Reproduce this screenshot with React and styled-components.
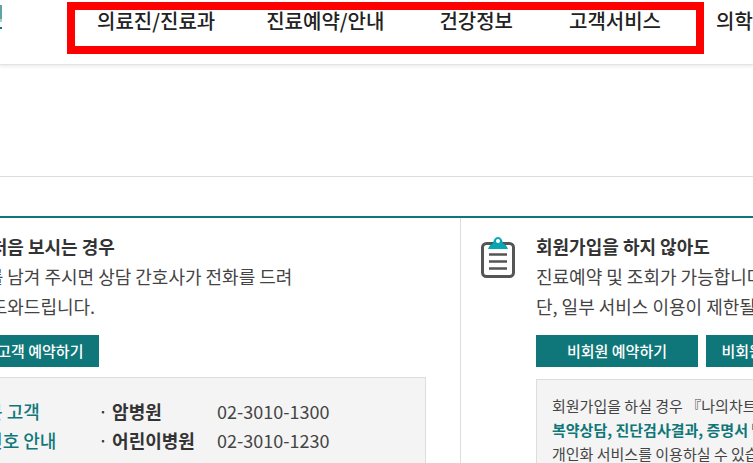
import React from 'react';
import styled, { createGlobalStyle } from 'styled-components';

const GlobalStyle = createGlobalStyle`
  html, body {
    margin: 0;
    padding: 0;
    background: #fff;
  }
  body {
    font-family: "Noto Sans CJK KR", "Noto Sans", sans-serif;
    color: #333;
  }
`;

const Viewport = styled.div`
  position: relative;
  width: 753px;
  height: 463px;
  overflow: hidden;
`;

const Header = styled.header`
  display: flex;
  align-items: flex-start;
  height: 64px;
  border-bottom: 1px solid #e4e4e4;
  box-shadow: 0 2px 3px rgba(0, 0, 0, 0.07);
`;

const LogoEdge = styled.svg`
  flex: none;
  display: block;
`;

const Nav = styled.nav`
  display: flex;
  padding: 6px 0 0 95px;
  white-space: nowrap;
`;

const NavItem = styled.a`
  margin-left: ${(props) => props.space || 0}px;
  font-size: 20px;
  font-weight: 500;
  line-height: 30px;
  color: #222;
`;

const Highlight = styled.div`
  position: absolute;
  left: 67px;
  top: 2px;
  width: 637px;
  height: 52px;
  box-sizing: border-box;
  border: 8px solid #f00;
`;

const Band = styled.div`
  height: 111px;
  border-bottom: 1px solid #ddd;
`;

const Columns = styled.div`
  display: flex;
  width: 1300px;
  margin: 39px 0 0 -138px;
  border-top: 2px solid #0f7779;
`;

const Panel = styled.section`
  flex: none;
  display: grid;
  grid-template-columns: 34px 1fr;
  column-gap: 21px;
  box-sizing: border-box;
  width: ${(props) => props.width}px;
  height: 260px;
  padding: 13px 0 0 20px;
  border-right: ${(props) => (props.divided ? '1px solid #ddd' : '0')};
`;

const Icon = styled.svg`
  display: block;
  margin-top: 6px;
`;

const Title = styled.h3`
  margin: 0;
  font-size: 18px;
  font-weight: 700;
  line-height: 30px;
  color: #333;
  white-space: nowrap;
`;

const Text = styled.p`
  margin: 0;
  font-size: 18px;
  line-height: 30px;
  color: #444;
  white-space: nowrap;
`;

const Buttons = styled.div`
  display: flex;
  gap: 8px;
  margin-top: 14px;
`;

const Button = styled.a`
  display: block;
  width: 162px;
  font-size: 15px;
  font-weight: 500;
  line-height: 32px;
  text-align: center;
  color: #fff;
  background: #0f7779;
  white-space: nowrap;
`;

const InfoBox = styled.div`
  box-sizing: border-box;
  width: 489px;
  height: 160px;
  margin-top: ${(props) => props.gap}px;
  padding: ${(props) => props.pad}px 15px 0;
  background: #f4f4f4;
  border: 1px solid #ddd;
`;

const ContactRow = styled.div`
  display: grid;
  grid-template-columns: 147px 117px 1fr;
  font-size: 18px;
  line-height: 29px;
`;

const ContactLink = styled.a`
  font-weight: 500;
  color: #0f7779;
  white-space: nowrap;
`;

const ContactName = styled.span`
  font-weight: 700;
  color: #333;
  white-space: nowrap;

  &:before {
    content: "·";
    margin: 0 4px 0 -2px;
    font-weight: 400;
  }
`;

const Phone = styled.span`
  color: #444;
`;

const NoteLine = styled.p`
  margin: 0;
  font-size: 15px;
  font-weight: ${(props) => (props.strong ? 700 : 400)};
  line-height: 24px;
  color: ${(props) => (props.strong ? '#0f7779' : '#444')};
  white-space: nowrap;
`;

function ClipboardIcon() {
  return (
    <Icon width="34" height="41" viewBox="0 0 34 41">
      <rect x="1.5" y="6.5" width="31" height="33" rx="4" fill="#fff" stroke="#555" strokeWidth="3" />
      <path d="M7 12 C8 9 10 7 12 6.5 C12.5 3 14 0 17 0 C20 0 21.5 3 22 6.5 C24 7 26 9 27 12 Z" fill="#0aa5b2" />
      <circle cx="17" cy="4" r="2" fill="#fff" />
      <path d="M8 17.5 H26 M8 24.5 H26 M8 31.5 H26" stroke="#555" strokeWidth="2.6" />
    </Icon>
  );
}

export default function App() {
  return (
    <Viewport>
      <GlobalStyle />
      <Header>
        <LogoEdge width="2" height="30" viewBox="0 0 2 30">
          <rect y="5" width="2" height="14" fill="#5fa3a5" />
          <rect y="19" width="2" height="3" fill="#a9cfd0" />
          <rect y="27" width="2" height="2" fill="#0f7779" />
        </LogoEdge>
        <Nav>
          <NavItem>의료진/진료과</NavItem>
          <NavItem space={51}>진료예약/안내</NavItem>
          <NavItem space={55}>건강정보</NavItem>
          <NavItem space={56}>고객서비스</NavItem>
          <NavItem space={55}>의학정보</NavItem>
        </Nav>
      </Header>
      <Highlight />
      <Band />
      <Columns>
        <Panel width={599} divided>
          <ClipboardIcon />
          <div>
            <Title>병원을 처음 보시는 경우</Title>
            <Text>연락처를 남겨 주시면 상담 간호사가 전화를 드려</Text>
            <Text>예약을 도와드립니다.</Text>
            <Buttons>
              <Button>첫방문 고객 예약하기</Button>
            </Buttons>
            <InfoBox gap={10} pad={19}>
              <ContactRow>
                <ContactLink>첫방문 고객</ContactLink>
                <ContactName>암병원</ContactName>
                <Phone>02-3010-1300</Phone>
              </ContactRow>
              <ContactRow>
                <ContactLink>전화번호 안내</ContactLink>
                <ContactName>어린이병원</ContactName>
                <Phone>02-3010-1230</Phone>
              </ContactRow>
            </InfoBox>
          </div>
        </Panel>
        <Panel width={700}>
          <ClipboardIcon />
          <div>
            <Title>회원가입을 하지 않아도</Title>
            <Text>진료예약 및 조회가 가능합니다.</Text>
            <Text>단, 일부 서비스 이용이 제한될 수 있습니다.</Text>
            <Buttons>
              <Button>비회원 예약하기</Button>
              <Button>비회원 예약 조회하기</Button>
            </Buttons>
            <InfoBox gap={12} pad={14}>
              <NoteLine>회원가입을 하실 경우 『나의차트』를 통해</NoteLine>
              <NoteLine strong>복약상담, 진단검사결과, 증명서 발급 등</NoteLine>
              <NoteLine>개인화 서비스를 이용하실 수 있습니다.</NoteLine>
            </InfoBox>
          </div>
        </Panel>
      </Columns>
    </Viewport>
  );
}
